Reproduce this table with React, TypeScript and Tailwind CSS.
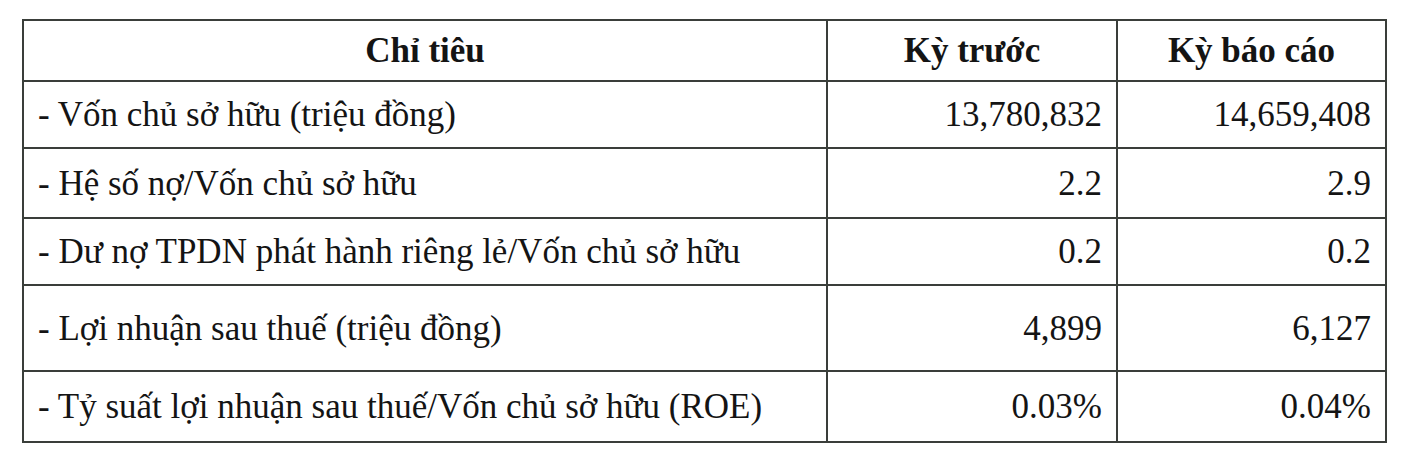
import React from "react";

const rows: { label: string; prev: string; curr: string; h: string }[] = [
    { label: "- Vốn chủ sở hữu (triệu đồng)", prev: "13,780,832", curr: "14,659,408", h: "h-[67px]" },
    { label: "- Hệ số nợ/Vốn chủ sở hữu", prev: "2.2", curr: "2.9", h: "h-[70px]" },
    { label: "- Dư nợ TPDN phát hành riêng lẻ/Vốn chủ sở hữu", prev: "0.2", curr: "0.2", h: "h-[67px]" },
    { label: "- Lợi nhuận sau thuế (triệu đồng)", prev: "4,899", curr: "6,127", h: "h-[86px]" },
    { label: "- Tỷ suất lợi nhuận sau thuế/Vốn chủ sở hữu (ROE)", prev: "0.03%", curr: "0.04%", h: "h-[71px]" },
];

export default function App() {
    return (
        <div className="w-[1408px] h-[462px] bg-white pt-[19px] pl-[22px] font-['Liberation_Serif',serif] text-[#141414]">
            <table className="table-fixed border-collapse w-[1363px] text-[35px] leading-none">
                <colgroup>
                    <col className="w-[804px]" />
                    <col className="w-[290px]" />
                    <col className="w-[269px]" />
                </colgroup>
                <thead>
                    <tr className="h-[61px]">
                        <th className="border-2 border-[#3a3e3a] font-bold text-center align-middle">Chỉ tiêu</th>
                        <th className="border-2 border-[#3a3e3a] font-bold text-center align-middle">Kỳ trước</th>
                        <th className="border-2 border-[#3a3e3a] font-bold text-center align-middle">Kỳ báo cáo</th>
                    </tr>
                </thead>
                <tbody>
                    {rows.map(r => (
                        <tr key={r.label} className={r.h}>
                            <td className="border-2 border-[#3a3e3a] pl-[14px] align-middle">{r.label}</td>
                            <td className="border-2 border-[#3a3e3a] pr-[14px] text-right align-middle">{r.prev}</td>
                            <td className="border-2 border-[#3a3e3a] pr-[14px] text-right align-middle">{r.curr}</td>
                        </tr>
                    ))}
                </tbody>
            </table>
        </div>
    );
}
